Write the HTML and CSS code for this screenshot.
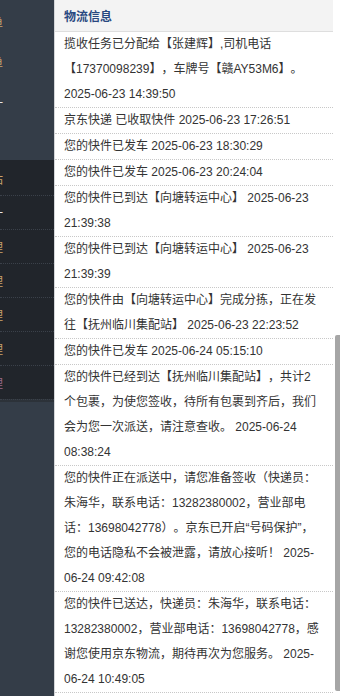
FILE: index.html
```html
<!DOCTYPE html>
<html lang="zh-CN">
<head>
<meta charset="utf-8">
<title>物流信息</title>
<link rel="stylesheet" href="styles.css">
</head>
<body>
<div class="app">
  <nav class="sidebar">
    <div class="nav-top">
      <div class="nav-item"><span class="frag orange">单</span></div>
      <div class="nav-item"><span class="frag orange">单</span></div>
      <div class="nav-item"><span class="frag white">一</span></div>
    </div>
    <div class="nav-dark">
      <div class="nav-item dark"><span class="frag orange">站</span></div>
      <div class="nav-item dark"><span class="frag white">一</span></div>
      <div class="nav-item dark"><span class="frag orange">理</span></div>
      <div class="nav-item dark"><span class="frag orange">理</span></div>
      <div class="nav-item dark"><span class="frag orange">理</span></div>
      <div class="nav-item dark"><span class="frag orange">理</span></div>
      <div class="nav-item dark"><span class="frag purple">理</span></div>
    </div>
    <div class="nav-bottom"></div>
  </nav>
  <main class="panel">
    <section class="content">
      <div class="panel-head">物流信息</div>
      <div class="row">揽收任务已分配给【张建辉】,司机电话【17370098239】，车牌号【赣AY53M6】。 2025-06-23 14:39:50</div>
      <div class="row">京东快递 已收取快件 2025-06-23 17:26:51</div>
      <div class="row">您的快件已发车 2025-06-23 18:30:29</div>
      <div class="row">您的快件已发车 2025-06-23 20:24:04</div>
      <div class="row">您的快件已到达【向塘转运中心】 2025-06-23 21:39:38</div>
      <div class="row">您的快件已到达【向塘转运中心】 2025-06-23 21:39:39</div>
      <div class="row">您的快件由【向塘转运中心】完成分拣，正在发往【抚州临川集配站】 2025-06-23 22:23:52</div>
      <div class="row">您的快件已发车 2025-06-24 05:15:10</div>
      <div class="row">您的快件已经到达【抚州临川集配站】，共计2个包裹，为使您签收，待所有包裹到齐后，我们会为您一次派送，请注意查收。 2025-06-24 08:38:24</div>
      <div class="row">您的快件正在派送中，请您准备签收（快递员：朱海华，联系电话：13282380002，营业部电话：13698042778）。京东已开启“号码保护”，您的电话隐私不会被泄露，请放心接听！ 2025-06-24 09:42:08</div>
      <div class="row">您的快件已送达，快递员：朱海华，联系电话：13282380002，营业部电话：13698042778，感谢您使用京东物流，期待再次为您服务。 2025-06-24 10:49:05</div>
    </section>
    <div class="scrollbar"><div class="thumb"></div></div>
  </main>
</div>
</body>
</html>
```

FILE: styles.css
```css
html, body {
  margin: 0;
  padding: 0;
  background: #ffffff;
}
body {
  font-family: "Liberation Sans", "Noto Sans CJK SC", sans-serif;
  font-size: 12px;
  color: #333333;
  text-spacing-trim: space-all;
}
.app {
  display: flex;
  height: 696px;
  overflow: hidden;
}
.sidebar {
  width: 54px;
  flex: none;
  display: flex;
  flex-direction: column;
  background: #343d48;
  overflow: hidden;
}
.nav-top {
  height: 160px;
  padding-top: 3px;
  box-sizing: border-box;
}
.nav-item {
  height: 40px;
  display: flex;
  align-items: center;
  white-space: nowrap;
}
.nav-dark {
  background: #21252b;
  height: 242px;
  padding-top: 2px;
  box-sizing: border-box;
  border-bottom: 3px solid #2c3239;
}
.nav-item.dark {
  height: 34px;
  border-bottom: 1px dotted #3b414a;
  box-sizing: border-box;
}
.nav-bottom {
  flex: 1;
}
.frag {
  font-family: "Noto Sans CJK SC", sans-serif;
  font-size: 12px;
  margin-left: -9px;
  line-height: 14px;
}
.orange { color: #c9a36c; }
.white { color: #e6e6e6; }
.purple { color: #9a6a8a; }

.panel {
  flex: 1;
  display: flex;
  border-left: 1px solid #d4d6d9;
  min-width: 0;
}
.content {
  flex: 1;
  min-width: 0;
}
.panel-head {
  height: 31px;
  line-height: 31px;
  background: #f3f3f3;
  border-bottom: 1px solid #dedede;
  padding-left: 9px;
  font-weight: bold;
  color: #284880;
  font-family: "Noto Sans CJK SC", sans-serif;
}
.row {
  line-height: 25px;
  padding: 0 11px 0 9px;
  border-bottom: 1px dotted #c8c8c8;
  color: #333333;
}
.scrollbar {
  width: 7px;
  flex: none;
  display: flex;
  flex-direction: column;
  align-items: flex-end;
  padding-top: 335px;
  box-sizing: border-box;
}
.thumb {
  width: 5px;
  height: 356px;
  background: #a6a6a6;
  border-radius: 2px 0 0 2px;
}
```
